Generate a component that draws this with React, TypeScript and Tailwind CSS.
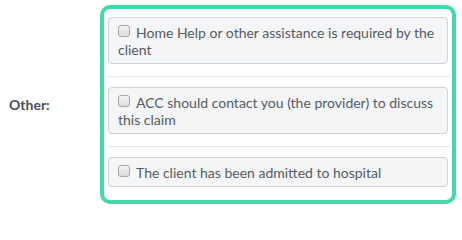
const items = [
  'Home Help or other assistance is required by the client',
  'ACC should contact you (the provider) to discuss this claim',
  'The client has been admitted to hospital',
];

function Checkbox() {
  return (
    <span className="mt-px mr-[6px] inline-block h-3 w-3 rounded-[3px] border border-[#a8a8a8] bg-gradient-to-b from-[#f3f3f3] to-[#dcdcdc] align-text-top" />
  );
}

export default function App() {
  return (
    <div className="flex h-[209px] w-[462px] items-center bg-white pl-[9px] font-['Lato','Liberation_Sans',sans-serif] text-[14px] text-[#555b61]">
      <div className="w-[91px] font-bold text-[#4a5058]">Other:</div>
      <div className="w-[356px] rounded-[10px] border-4 border-[#40dbab] pt-2 pb-[13px]">
        {items.map((text, i) => (
          <div key={i}>
            <div className={i > 0 ? 'px-1 pt-[10px]' : 'px-1'}>
              <label className="block rounded-[4px] border border-[#cfd2d6] bg-[#f4f5f7] pt-[6px] pr-2 pb-[5px] pl-[9px] leading-[17px]">
                <Checkbox />
                {text}
              </label>
            </div>
            {i < items.length - 1 && <div className="mx-[2px] mt-3 h-px bg-[#e6e7e9]" />}
          </div>
        ))}
      </div>
    </div>
  );
}
